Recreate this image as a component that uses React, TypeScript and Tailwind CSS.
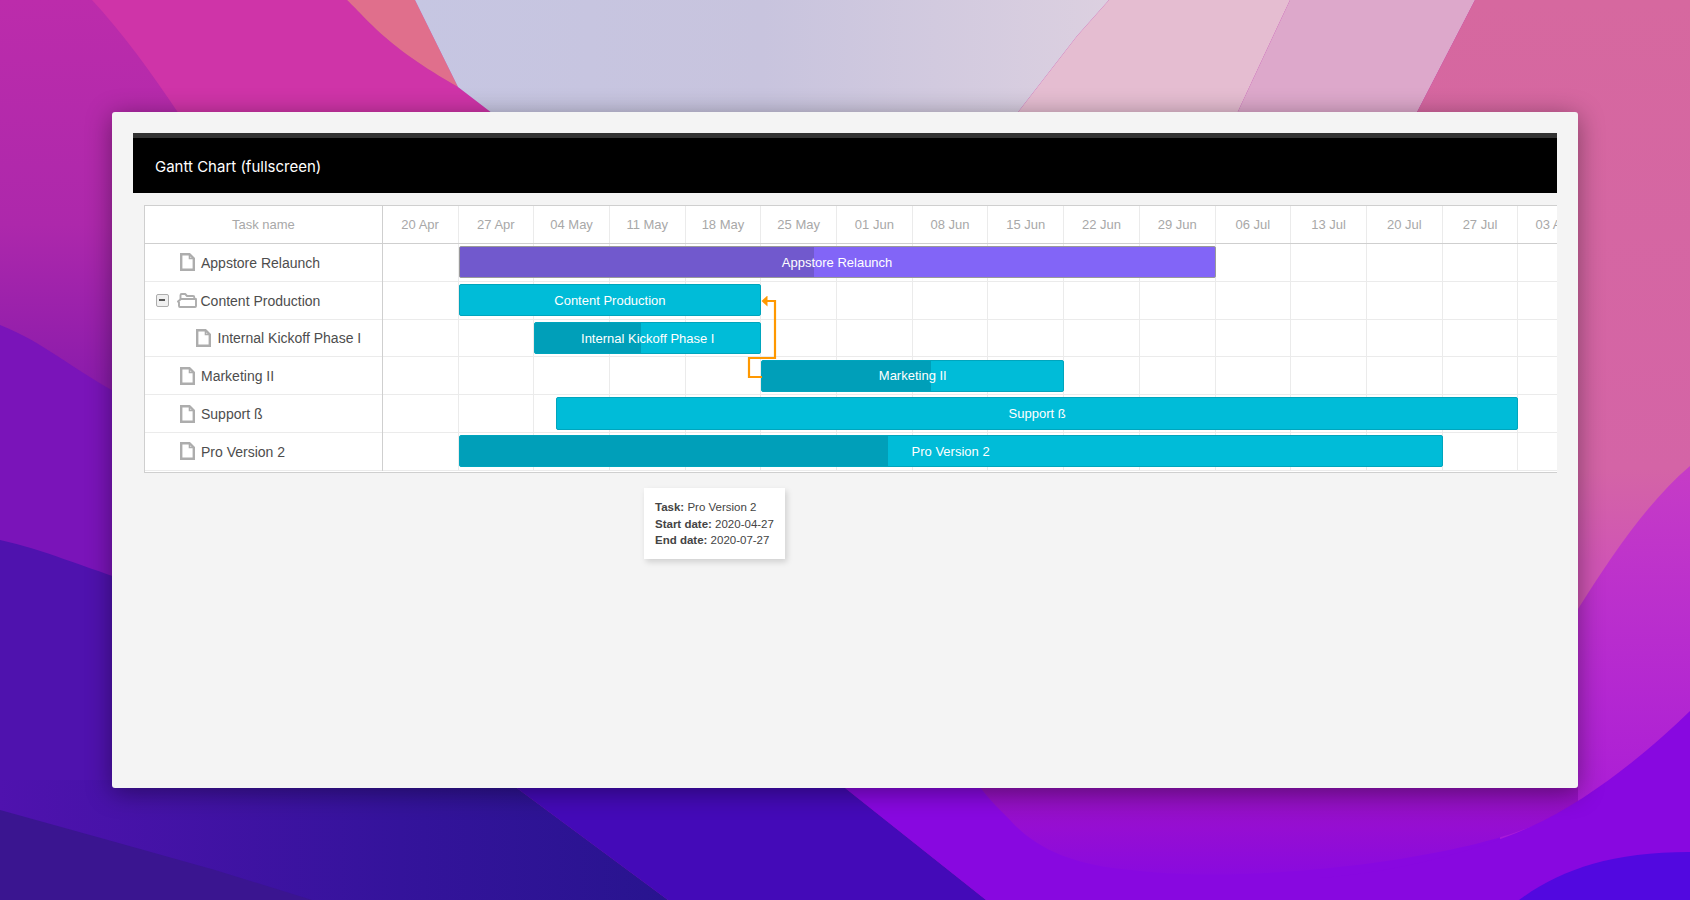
import * as React from 'react';

const ARIAL = 'font-["Liberation_Sans",Arial,sans-serif]';
const COL_W = 75.71;
const DAY_W = COL_W / 7;

const weeks = [
  '20 Apr', '27 Apr', '04 May', '11 May', '18 May', '25 May', '01 Jun', '08 Jun',
  '15 Jun', '22 Jun', '29 Jun', '06 Jul', '13 Jul', '20 Jul', '27 Jul', '03 Aug',
];

type Task = {
  name: string;
  start: number;
  end: number;
  progress: number;
  depth: number;
  folder?: boolean;
  project?: boolean;
};

const tasks: Task[] = [
  { name: 'Appstore Relaunch', start: 7, end: 77, progress: 0.47, depth: 0, project: true },
  { name: 'Content Production', start: 7, end: 35, progress: 0, depth: 0, folder: true },
  { name: 'Internal Kickoff Phase I', start: 14, end: 35, progress: 0.47, depth: 1 },
  { name: 'Marketing II', start: 35, end: 63, progress: 0.56, depth: 0 },
  { name: 'Support ß', start: 16, end: 105, progress: 0, depth: 0 },
  { name: 'Pro Version 2', start: 7, end: 98, progress: 0.436, depth: 0 },
];

function Wallpaper() {
  return (
    <svg className="absolute inset-0" width="1690" height="900" viewBox="0 0 1690 900" aria-hidden="true">
      <defs>
        <linearGradient id="left" x1="0" y1="0" x2="0" y2="1">
          <stop offset="0" stopColor="#bc2cab" />
          <stop offset="0.25" stopColor="#ad28ab" />
          <stop offset="0.42" stopColor="#8c1cab" />
          <stop offset="1" stopColor="#8c1cab" />
        </linearGradient>
        <linearGradient id="lav" x1="0" y1="0" x2="1" y2="0">
          <stop offset="0" stopColor="#c6c6e2" />
          <stop offset="0.5" stopColor="#c8c4de" />
          <stop offset="1" stopColor="#dcd0e0" />
        </linearGradient>
        <linearGradient id="rightBg" x1="0" y1="0" x2="0" y2="1">
          <stop offset="0" stopColor="#d6689f" />
          <stop offset="0.6" stopColor="#d464a6" />
          <stop offset="0.72" stopColor="#d055b4" />
        </linearGradient>
        <linearGradient id="rightLow" x1="0" y1="0" x2="0" y2="1">
          <stop offset="0" stopColor="#c63cc6" />
          <stop offset="1" stopColor="#a81ad8" />
        </linearGradient>
        <linearGradient id="navy" x1="0" y1="0" x2="1" y2="0">
          <stop offset="0" stopColor="#4f12ae" />
          <stop offset="0.6" stopColor="#34139b" />
          <stop offset="1" stopColor="#28148f" />
        </linearGradient>
        <linearGradient id="blob" x1="0" y1="0" x2="0" y2="1">
          <stop offset="0" stopColor="#9412b8" />
          <stop offset="0.5" stopColor="#960ed2" />
          <stop offset="1" stopColor="#8a0ade" />
        </linearGradient>
      </defs>
      {/* left side */}
      <rect width="1690" height="900" fill="url(#left)" />
      <path d="M0 325C45 342 80 376 140 405L140 620H0Z" fill="#7a14b9" />
      <path d="M0 540C45 550 80 566 140 585L140 800H0Z" fill="#4f12ae" />
      {/* bottom */}
      <path d="M0 780H506L668 900H0Z" fill="url(#navy)" />
      <path d="M0 810L108 840L215 870L312 900H0Z" fill="#3a1590" />
      <path d="M506 780H835L986 900H668Z" fill="#440ab8" />
      <path d="M835 780H1690V900H986Z" fill="#8808e0" />
      {/* top bands */}
      <path d="M92 0H347C370 22 385 45 458 87L501 120H183C150 70 120 30 92 0Z" fill="#cf34a8" />
      <path d="M347 0H415L458 87C385 45 370 22 347 0Z" fill="#e06f8c" />
      <path d="M415 0H1109L1077 36L1012 120H501L458 87Z" fill="url(#lav)" />
      <path d="M1109 0H1290L1234 120H1012L1077 36Z" fill="#e5bdd1" />
      <path d="M1290 0H1475L1413 120H1234Z" fill="#dda8cb" />
      {/* right side */}
      <path d="M1475 0H1690V780H1500V120H1413Z" fill="url(#rightBg)" />
      <path d="M1690 466C1650 500 1615 550 1578 609L1500 700V840H1690Z" fill="url(#rightLow)" />
      <path d="M975 780H1578V815L1530 827C1450 860 1250 885 1131 870C1070 865 1034 847 1010 820C995 805 985 795 975 780Z" fill="url(#blob)" />
      <path d="M1690 711C1650 750 1590 800 1530 827C1480 850 1400 872 1320 878L1320 900H1690Z" fill="#8808e0" />
      <path d="M1519 900C1560 870 1610 852 1690 852V900Z" fill="#5208e0" />
    </svg>
  );
}

function FileIcon() {
  return (
    <svg width="15" height="18" viewBox="0 0 15 18" fill="none" stroke="#adadad" strokeWidth="2.4" aria-hidden="true">
      <path d="M1.2 1.2H9.5L13.8 5.5V16.8H1.2Z" />
      <path d="M9.5 1.2V5.5H13.8" strokeWidth="1.6" />
    </svg>
  );
}

function FolderIcon() {
  return (
    <svg width="20" height="15" viewBox="0 0 20 15" fill="none" stroke="#adadad" strokeWidth="1.9" strokeLinejoin="round" aria-hidden="true">
      <path d="M3.5 6V2.2C3.5 1.4 4 1 4.7 1H8.2L10 3H16C16.8 3 17.3 3.5 17.3 4.2V6" />
      <path d="M4 6H19V13C19 13.6 18.5 14 18 14H3C2.4 14 2 13.6 2 13V9.5L1 8.5Z" />
    </svg>
  );
}

function CollapseIcon() {
  return (
    <span className="flex h-[13px] w-[13px] items-center justify-center rounded-[2px] border-[1.5px] border-[#adadad] bg-[#f0f0f0]">
      <span className="h-[2px] w-[6px] bg-[#555]" />
    </span>
  );
}

function TaskName({ task }: { task: Task }) {
  return (
    <div className="flex h-[37.8px] items-center border-b border-[#ebebeb] text-[14px] text-[#4d4d4d]">
      <span className={task.folder ? 'ml-[10.5px] w-[21px]' : 'w-[34.5px]'}>
        {task.folder && <CollapseIcon />}
      </span>
      {task.depth > 0 && <span className="w-[16.5px]" />}
      <span className={task.folder ? 'mr-[4px]' : 'mr-[6.5px]'}>
        {task.folder ? <FolderIcon /> : <FileIcon />}
      </span>
      <span className="whitespace-nowrap pt-[2px]">{task.name}</span>
    </div>
  );
}

function Bar({ task }: { task: Task }) {
  const left = task.start * DAY_W;
  const width = (task.end - task.start) * DAY_W;
  const tone = task.project
    ? 'border border-[#9a9a9a] bg-[#8265f7]'
    : 'border border-[#00a5bd] bg-[#00bcd8]';
  return (
    <div
      className={`absolute top-[2.2px] h-[32.2px] overflow-hidden rounded-[2px] ${tone}`}
      style={{ left, width }}
    >
      {task.progress > 0 && (
        <div
          className={`absolute inset-y-0 left-0 ${task.project ? 'bg-[#7159cd]' : 'bg-[#009fb9]'}`}
          style={{ width: `${task.progress * 100}%` }}
        />
      )}
      <div className="relative flex h-full items-center justify-center whitespace-nowrap pt-[1px] text-[13px] text-white">
        {task.name}
      </div>
    </div>
  );
}

function GridRow({ task }: { task: Task }) {
  return (
    <div className="relative flex h-[37.8px] border-b border-[#ebebeb]">
      {weeks.map((w) => (
        <div key={w} className="h-full w-[75.71px] shrink-0 border-r border-[#ebebeb]" />
      ))}
      <Bar task={task} />
    </div>
  );
}

export default function App() {
  return (
    <div className={`relative h-[900px] w-[1690px] overflow-hidden ${ARIAL}`}>
      <Wallpaper />
      <div className="absolute left-[112px] top-[112px] flex h-[676px] w-[1466px] flex-col rounded-[3px] bg-[#f4f4f4] px-[21px] pt-[21px] shadow-[0_4px_26px_rgba(0,0,0,0.4)]">
        <div className="flex h-[60px] shrink-0 items-center border-t-[5.5px] border-[#333] bg-black pl-[22px] pt-[3px] font-['Inter',sans-serif] text-[15px] text-white">
          Gantt Chart (fullscreen)
        </div>

        <div className="relative ml-[11px] mt-[12px] flex border-y border-l border-[#cfcfcf] bg-white pb-[1px]">
          <div className="w-[237.8px] shrink-0 border-r-[1.5px] border-[#cfcfcf]">
            <div className="flex h-[38px] items-center justify-center border-b border-[#cfcfcf] text-[13px] text-[#a8a8a8]">
              Task name
            </div>
            {tasks.map((t) => (
              <TaskName key={t.name} task={t} />
            ))}
          </div>

          <div className="relative min-w-0 flex-1 overflow-hidden">
            <div className="flex h-[38px] border-b border-[#cfcfcf]">
              {weeks.map((w) => (
                <div
                  key={w}
                  className="flex h-full w-[75.71px] shrink-0 items-center justify-center whitespace-nowrap border-r border-[#ebebeb] text-[13px] text-[#a8a8a8]"
                >
                  {w}
                </div>
              ))}
            </div>
            {tasks.map((t) => (
              <GridRow key={t.name} task={t} />
            ))}
            {/* dependency link */}
            <svg className="absolute left-[364px] top-[90px]" width="32" height="84" viewBox="0 0 32 84" fill="none" aria-hidden="true">
              <path d="M15 81H2V62H28V5H19" stroke="#ff9800" strokeWidth="2.2" />
              <path d="M14.5 5L20.5 -0.5V10.5Z" fill="#ff9800" />
            </svg>
          </div>
        </div>

        {/* tooltip */}
        <div className="absolute left-[532px] top-[376px] h-[71px] w-[141px] whitespace-nowrap bg-white px-[11px] pt-[11px] text-[11.5px] leading-[16.5px] text-[#444] shadow-[2px_3px_6px_rgba(0,0,0,0.15)]">
          <div><b>Task:</b> Pro Version 2</div>
          <div><b>Start date:</b> 2020-04-27</div>
          <div><b>End date:</b> 2020-07-27</div>
        </div>
      </div>
    </div>
  );
}
